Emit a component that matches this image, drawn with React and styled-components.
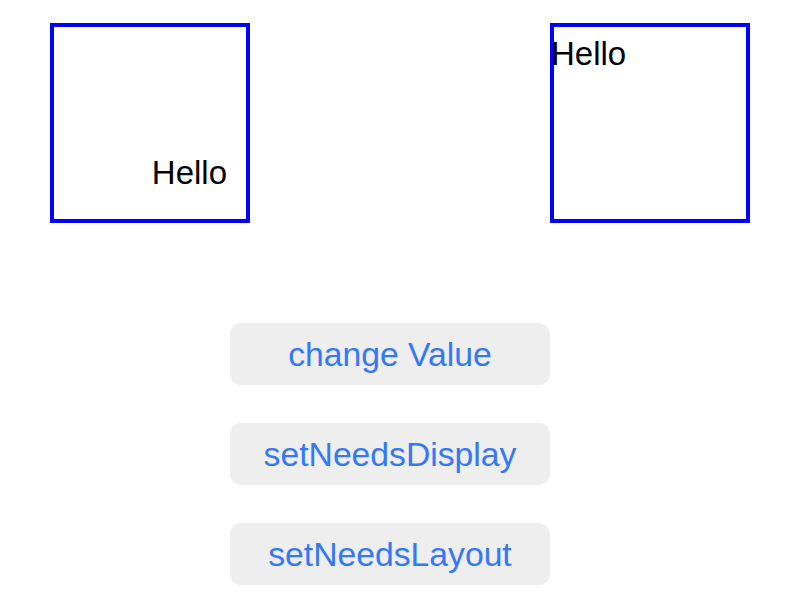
import React from "react";
import styled, { createGlobalStyle } from "styled-components";

const GlobalStyle = createGlobalStyle`
  html, body {
    margin: 0;
    padding: 0;
    background: #ffffff;
    font-family: "Liberation Sans", Arial, sans-serif;
  }
`;

const Screen = styled.div`
  width: 808px;
  height: 611px;
  display: flex;
  flex-direction: column;
  overflow: hidden;
`;

const BoxRow = styled.div`
  display: flex;
  justify-content: space-between;
  padding: 23px 58px 0 50px;
`;

const Box = styled.div`
  box-sizing: border-box;
  width: 200px;
  height: 200px;
  border: 4px solid #0000ff;
  display: flex;
  flex-direction: column;
  justify-content: ${(p) => (p.$bottom ? "flex-end" : "flex-start")};
  align-items: ${(p) => (p.$bottom ? "flex-end" : "flex-start")};
  padding: ${(p) => (p.$bottom ? "0 19px 27px 0" : "8px 0 0 0")};
`;

const Label = styled.span`
  font-size: 33px;
  line-height: normal;
  color: #000000;
  margin-left: ${(p) => (p.$overlap ? "-3px" : "0")};
`;

const ButtonColumn = styled.div`
  display: flex;
  flex-direction: column;
  gap: 38px;
  padding: 100px 0 0 230px;
`;

const Button = styled.button`
  box-sizing: border-box;
  width: 320px;
  height: 62px;
  border: none;
  border-radius: 11px;
  background: #eeeeee;
  color: #3478f6;
  font-family: "Liberation Sans", Arial, sans-serif;
  font-size: 33.7px;
  line-height: normal;
  padding: 0;
  display: flex;
  align-items: center;
  justify-content: center;
  cursor: pointer;
`;

export default function App() {
  return (
    <>
      <GlobalStyle />
      <Screen>
        <BoxRow>
          <Box $bottom>
            <Label>Hello</Label>
          </Box>
          <Box>
            <Label $overlap>Hello</Label>
          </Box>
        </BoxRow>
        <ButtonColumn>
          <Button>change Value</Button>
          <Button>setNeedsDisplay</Button>
          <Button>setNeedsLayout</Button>
        </ButtonColumn>
      </Screen>
    </>
  );
}
